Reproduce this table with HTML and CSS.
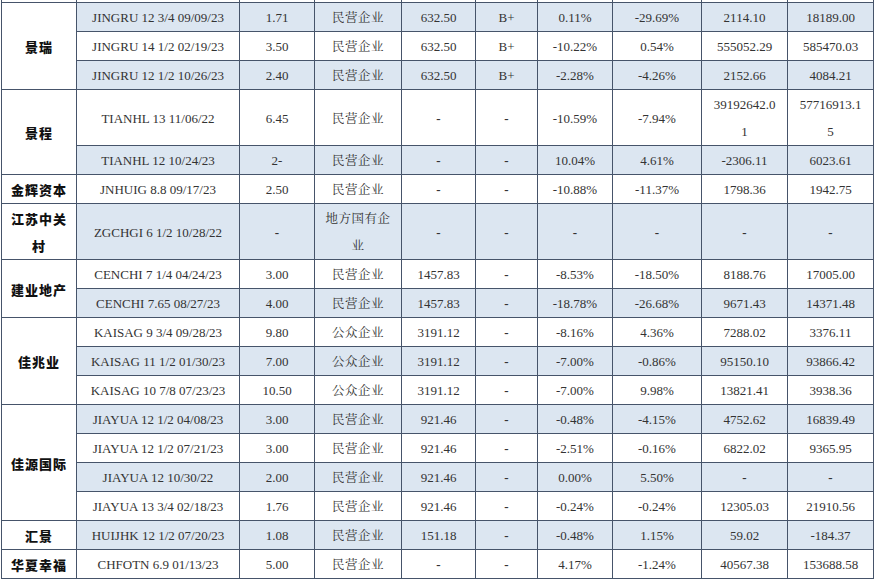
FILE: index.html
```html
<!DOCTYPE html>
<html lang="zh">
<head>
<meta charset="utf-8">
<link rel="stylesheet" href="styles.css">
</head>
<body>
<table class="bonds">
  <colgroup>
    <col class="c-issuer"><col class="c-bond"><col class="c-num"><col class="c-type"><col class="c-w87">
    <col class="c-rate"><col class="c-chg"><col class="c-chg2"><col class="c-v1"><col class="c-v2">
  </colgroup>
  <tbody>
    <tr class="cut"><td></td><td></td><td></td><td></td><td></td><td></td><td></td><td></td><td></td><td></td></tr>
    <tr class="sh"><td class="issuer" rowspan="3">景瑞</td><td>JINGRU 12 3/4 09/09/23</td><td>1.71</td><td class="cn">民营企业</td><td>632.50</td><td>B+</td><td>0.11%</td><td>-29.69%</td><td>2114.10</td><td>18189.00</td></tr>
    <tr><td>JINGRU 14 1/2 02/19/23</td><td>3.50</td><td class="cn">民营企业</td><td>632.50</td><td>B+</td><td>-10.22%</td><td>0.54%</td><td>555052.29</td><td>585470.03</td></tr>
    <tr class="sh"><td>JINGRU 12 1/2 10/26/23</td><td>2.40</td><td class="cn">民营企业</td><td>632.50</td><td>B+</td><td>-2.28%</td><td>-4.26%</td><td>2152.66</td><td>4084.21</td></tr>
    <tr><td class="issuer" rowspan="2">景程</td><td>TIANHL 13 11/06/22</td><td>6.45</td><td class="cn">民营企业</td><td class="dash">-</td><td class="dash">-</td><td>-10.59%</td><td>-7.94%</td><td>39192642.0<br>1</td><td>57716913.1<br>5</td></tr>
    <tr class="sh"><td>TIANHL 12 10/24/23</td><td>2-</td><td class="cn">民营企业</td><td class="dash">-</td><td class="dash">-</td><td>10.04%</td><td>4.61%</td><td>-2306.11</td><td>6023.61</td></tr>
    <tr><td class="issuer">金辉资本</td><td>JNHUIG 8.8 09/17/23</td><td>2.50</td><td class="cn">民营企业</td><td class="dash">-</td><td class="dash">-</td><td>-10.88%</td><td>-11.37%</td><td>1798.36</td><td>1942.75</td></tr>
    <tr class="sh"><td class="issuer">江苏中关<br>村</td><td>ZGCHGI 6 1/2 10/28/22</td><td class="dash">-</td><td class="cn">地方国有企<br>业</td><td class="dash">-</td><td class="dash">-</td><td class="dash">-</td><td class="dash">-</td><td class="dash">-</td><td class="dash">-</td></tr>
    <tr><td class="issuer" rowspan="2">建业地产</td><td>CENCHI 7 1/4 04/24/23</td><td>3.00</td><td class="cn">民营企业</td><td>1457.83</td><td class="dash">-</td><td>-8.53%</td><td>-18.50%</td><td>8188.76</td><td>17005.00</td></tr>
    <tr class="sh"><td>CENCHI 7.65 08/27/23</td><td>4.00</td><td class="cn">民营企业</td><td>1457.83</td><td class="dash">-</td><td>-18.78%</td><td>-26.68%</td><td>9671.43</td><td>14371.48</td></tr>
    <tr><td class="issuer" rowspan="3">佳兆业</td><td>KAISAG 9 3/4 09/28/23</td><td>9.80</td><td class="cn">公众企业</td><td>3191.12</td><td class="dash">-</td><td>-8.16%</td><td>4.36%</td><td>7288.02</td><td>3376.11</td></tr>
    <tr class="sh"><td>KAISAG 11 1/2 01/30/23</td><td>7.00</td><td class="cn">公众企业</td><td>3191.12</td><td class="dash">-</td><td>-7.00%</td><td>-0.86%</td><td>95150.10</td><td>93866.42</td></tr>
    <tr><td>KAISAG 10 7/8 07/23/23</td><td>10.50</td><td class="cn">公众企业</td><td>3191.12</td><td class="dash">-</td><td>-7.00%</td><td>9.98%</td><td>13821.41</td><td>3938.36</td></tr>
    <tr class="sh"><td class="issuer" rowspan="4">佳源国际</td><td>JIAYUA 12 1/2 04/08/23</td><td>3.00</td><td class="cn">民营企业</td><td>921.46</td><td class="dash">-</td><td>-0.48%</td><td>-4.15%</td><td>4752.62</td><td>16839.49</td></tr>
    <tr><td>JIAYUA 12 1/2 07/21/23</td><td>3.00</td><td class="cn">民营企业</td><td>921.46</td><td class="dash">-</td><td>-2.51%</td><td>-0.16%</td><td>6822.02</td><td>9365.95</td></tr>
    <tr class="sh"><td>JIAYUA 12 10/30/22</td><td>2.00</td><td class="cn">民营企业</td><td>921.46</td><td class="dash">-</td><td>0.00%</td><td>5.50%</td><td class="dash">-</td><td class="dash">-</td></tr>
    <tr><td>JIAYUA 13 3/4 02/18/23</td><td>1.76</td><td class="cn">民营企业</td><td>921.46</td><td class="dash">-</td><td>-0.24%</td><td>-0.24%</td><td>12305.03</td><td>21910.56</td></tr>
    <tr class="sh"><td class="issuer">汇景</td><td>HUIJHK 12 1/2 07/20/23</td><td>1.08</td><td class="cn">民营企业</td><td>151.18</td><td class="dash">-</td><td>-0.48%</td><td>1.15%</td><td>59.02</td><td>-184.37</td></tr>
    <tr><td class="issuer">华夏幸福</td><td>CHFOTN 6.9 01/13/23</td><td>5.00</td><td class="cn">民营企业</td><td class="dash">-</td><td class="dash">-</td><td>4.17%</td><td>-1.24%</td><td>40567.38</td><td>153688.58</td></tr>
  </tbody>
</table>
</body>
</html>
```

FILE: styles.css
```css
html, body {
  margin: 0;
  padding: 0;
  background: #ffffff;
}

.bonds {
  margin: 0 0 0 1px;
  width: 872px;
  table-layout: fixed;
  border-collapse: collapse;
  font-family: "Liberation Serif", "Noto Serif CJK SC", "Noto Sans CJK SC", serif;
  font-size: 13px;
  color: #333333;
}

.c-issuer { width: 75px; }
.c-bond { width: 163px; }
.c-num { width: 75px; }
.c-type { width: 87px; }
.c-w87 { width: 74px; }
.c-rate { width: 62px; }
.c-chg { width: 75px; }
.c-chg2 { width: 89px; }
.c-v1 { width: 86px; }
.c-v2 { width: 86px; }

.bonds td {
  border: 1px solid #46546a;
  padding: 1px 0 0 0;
  line-height: 27px;
  text-align: center;
  vertical-align: middle;
  white-space: nowrap;
  overflow: hidden;
}

.bonds tr.sh td {
  background: #dce6f1;
}

.bonds tr.sh td.issuer,
.bonds td.issuer {
  background: #ffffff;
  font-family: "Noto Sans CJK SC", sans-serif;
  font-weight: 900;
  font-size: 13px;
  letter-spacing: 1px;
  color: #111111;
}

.bonds td.cn {
  font-family: "Noto Serif CJK SC", "Noto Sans CJK SC", serif;
  font-weight: 400;
  font-size: 12.5px;
  letter-spacing: 0.5px;
  color: #333333;
}

.bonds td.dash {
  font-weight: 700;
}

.bonds tr.cut td {
  height: 2px;
  padding: 0;
  line-height: 0;
  border-top: none;
}
```
